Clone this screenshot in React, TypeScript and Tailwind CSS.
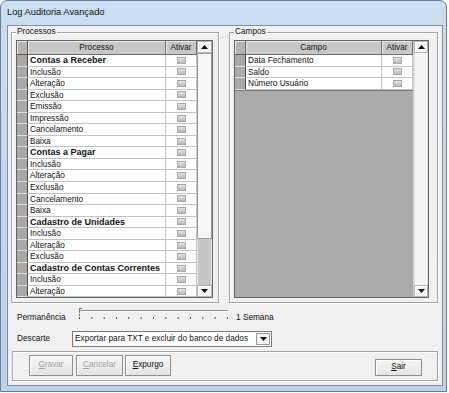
import React from "react";

type Item = { label: string; bold?: boolean };

const processos: Item[] = [
  { label: "Contas a Receber", bold: true },
  { label: "Inclusão" },
  { label: "Alteração" },
  { label: "Exclusão" },
  { label: "Emissão" },
  { label: "Impressão" },
  { label: "Cancelamento" },
  { label: "Baixa" },
  { label: "Contas a Pagar", bold: true },
  { label: "Inclusão" },
  { label: "Alteração" },
  { label: "Exclusão" },
  { label: "Cancelamento" },
  { label: "Baixa" },
  { label: "Cadastro de Unidades", bold: true },
  { label: "Inclusão" },
  { label: "Alteração" },
  { label: "Exclusão" },
  { label: "Cadastro de Contas Correntes", bold: true },
  { label: "Inclusão" },
  { label: "Alteração" },
];

const campos: Item[] = [
  { label: "Data Fechamento" },
  { label: "Saldo" },
  { label: "Número Usuário" },
];

const Arrow = ({ down }: { down?: boolean }) => (
  <svg width="7" height="4" viewBox="0 0 7 4">
    {down ? <path d="M0 0H7L3.5 4Z" fill="#111" /> : <path d="M0 4H7L3.5 0Z" fill="#111" />}
  </svg>
);

const ScrollBtn = ({ down }: { down?: boolean }) => (
  <div className="h-[12px] bg-[#f2f2f2] border border-[#b5b5b5] shadow-[inset_1px_1px_0_#fff] flex items-center justify-center">
    <Arrow down={down} />
  </div>
);

const Check = () => (
  <div className="w-[9px] h-[7px] border border-[#a8a8a8] bg-gradient-to-b from-[#e4e4e4] to-[#b9b9b9]" />
);

const Header = ({ title, textW }: { title: string; textW: string }) => (
  <div className="flex h-[14px] shrink-0 text-[8.25px] leading-[13px] text-[#111]">
    <div className="w-[11px] bg-[#b4b4b4] border-r border-b border-[#5c5c5c] shadow-[inset_1px_1px_0_#e6e6e6]" />
    <div className={`${textW} bg-[#c7c7c7] border-r border-b border-[#6e6e6e] shadow-[inset_1px_1px_0_#ececec] text-center`}>
      {title}
    </div>
    <div className="w-[31px] bg-[#c7c7c7] border-r border-b border-[#6e6e6e] shadow-[inset_1px_1px_0_#ececec] text-center">
      Ativar
    </div>
  </div>
);

const Row = ({ item, textW }: { item: Item; textW: string }) => (
  <div className="flex h-[11.55px] shrink-0">
    <div className="w-[11px] bg-[#a8a8a8] border-r border-r-[#4a4a4a] border-b border-b-[#dedede]" />
    <div
      className={`${textW} bg-white border-r border-b border-[#c2c2c2] pl-[2px] text-[#111] whitespace-nowrap overflow-hidden ${
        item.bold ? "font-bold text-[9px] leading-[11px]" : "text-[8.25px] leading-[11px]"
      }`}
    >
      {item.label}
    </div>
    <div className="w-[31px] bg-white border-r border-b border-[#c2c2c2] flex items-center justify-center">
      <Check />
    </div>
  </div>
);

const GroupBox = ({ title, w, children }: { title: string; w: string; children: React.ReactNode }) => (
  <div className={`relative ${w} h-[271px] border border-[#a3a3a3] shadow-[inset_1px_1px_0_#fff,1px_1px_0_#fff] pl-[4px] pt-[7px]`}>
    <span className="absolute -top-[7px] left-[4px] bg-[#f0f0f0] px-[1px] text-[8.25px] leading-[12px] text-[#111]">
      {title}
    </span>
    {children}
  </div>
);

const Slider = () => (
  <svg width="154" height="14" viewBox="0 0 154 14">
    <line x1="3" y1="3.5" x2="152" y2="3.5" stroke="#8c8c8c" />
    <line x1="4" y1="4.5" x2="152" y2="4.5" stroke="#fff" />
    <line x1="3.5" y1="1" x2="3.5" y2="11" stroke="#6f6f6f" strokeDasharray="2 1" />
    <line x1="3.5" y1="1.5" x2="6" y2="1.5" stroke="#6f6f6f" />
    {Array.from({ length: 13 }, (_, i) => (
      <rect key={i} x={3 + i * 12.33} y="10" width="1" height="2" fill="#555" />
    ))}
  </svg>
);

const Button = ({ children, w, h, disabled }: { children: React.ReactNode; w: string; h: string; disabled?: boolean }) => (
  <div
    className={`${w} ${h} border border-[#8e8e8e] bg-gradient-to-b from-[#f6f6f6] to-[#e4e4e4] shadow-[inset_1px_1px_0_#fff] flex items-center justify-center text-[8.25px] ${
      disabled ? "text-[#a2a2a2]" : "text-[#111]"
    }`}
  >
    {children}
  </div>
);

export default function App() {
  return (
    <div className="w-[449px] h-[393px] bg-white font-['Liberation_Sans',Arial,sans-serif]">
      <div className="w-[447px] h-[392px] rounded-t-[7px] border border-[#6c7f96] bg-gradient-to-b from-[#cbddf0] to-[#bcd2ea] flex flex-col">
        <div className="h-[24px] shrink-0 pl-[6px] flex items-center text-[9.3px] text-[#111]">Log Auditoria Avançado</div>
        <div className="flex-1 px-[6px] pr-[3px] pb-[5px] flex">
          <div className="flex-1 border border-[#7e8fa4] bg-[#f0f0f0] flex flex-col">
            <div className="mt-[6px] pl-[3px] flex gap-[10px]">
              <GroupBox title="Processos" w="w-[208px]">
                <div className="w-[197px] h-[258px] border border-[#666] flex overflow-hidden">
                  <div className="w-[180px] flex flex-col bg-white">
                    <Header title="Processo" textW="w-[138px]" />
                    {processos.map((p, i) => (
                      <Row key={i} item={p} textW="w-[138px]" />
                    ))}
                  </div>
                  <div className="w-[15px] flex flex-col bg-[#c4c4c4]">
                    <ScrollBtn />
                    <div className="h-[186px] bg-[#f6f6f6] border border-[#9e9e9e]" />
                    <div className="flex-1 bg-[#c6c6c6] border-x border-[#e8e8e8]" />
                    <ScrollBtn down />
                  </div>
                </div>
              </GroupBox>
              <GroupBox title="Campos" w="w-[209px]">
                <div className="w-[195px] h-[258px] border border-[#666] flex overflow-hidden">
                  <div className="w-[178px] flex flex-col bg-[#ababab]">
                    <div className="flex bg-[#c7c7c7]">
                      <Header title="Campo" textW="w-[136px]" />
                    </div>
                    {campos.map((p, i) => (
                      <Row key={i} item={p} textW="w-[136px]" />
                    ))}
                    <div className="w-[178px] border-t border-[#777]" />
                  </div>
                  <div className="w-[15px] flex flex-col bg-[#f4f4f4] border-l border-[#d0d0d0]">
                    <ScrollBtn />
                    <div className="flex-1 border-x border-[#e2e2e2]" />
                    <ScrollBtn down />
                  </div>
                </div>
              </GroupBox>
            </div>

            <div className="mt-[4px] h-[17px] flex items-start">
              <div className="w-[68px] pl-[9px] pt-[5px] text-[8.25px] leading-[11px] text-[#111]">Permanência</div>
              <Slider />
              <div className="ml-[6px] pt-[5px] text-[8.25px] leading-[11px] text-[#111]">1 Semana</div>
            </div>

            <div className="mt-[7px] h-[16px] flex items-center">
              <div className="w-[64px] pl-[9px] text-[8.25px] text-[#111]">Descarte</div>
              <div className="w-[200px] h-[16px] border border-[#7b7b7b] bg-white flex items-center">
                <div className="flex-1 pl-[2px] text-[8.25px] text-[#111] whitespace-nowrap">
                  Exportar para TXT e excluir do banco de dados
                </div>
                <div className="w-[14px] h-[12px] mr-[1px] border border-[#9a9a9a] bg-[#f2f2f2] flex items-center justify-center">
                  <Arrow down />
                </div>
              </div>
            </div>

            <div className="mt-[4px] ml-[4px] w-[426px] h-[30px] border border-[#a3a3a3] shadow-[inset_1px_1px_0_#fff,1px_1px_0_#fff] flex items-end pb-[4px] pl-[16px] pr-[15px]">
              <Button w="w-[44px]" h="h-[21px]" disabled>
                <span><u>G</u>ravar</span>
              </Button>
              <div className="ml-[3px]">
                <Button w="w-[47px]" h="h-[21px]" disabled>
                  <span><u>C</u>ancelar</span>
                </Button>
              </div>
              <div className="ml-[2px]">
                <Button w="w-[46px]" h="h-[21px]">
                  <span><u>E</u>xpurgo</span>
                </Button>
              </div>
              <div className="ml-auto">
                <Button w="w-[47px]" h="h-[17px]">
                  <span><u>S</u>air</span>
                </Button>
              </div>
            </div>
          </div>
        </div>
      </div>
    </div>
  );
}
